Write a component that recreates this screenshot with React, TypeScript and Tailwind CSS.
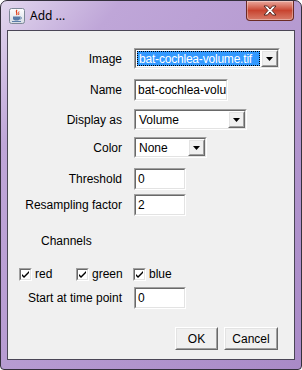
import type { ReactNode } from 'react';

function Sunken({ className = '', children }: { className?: string; children?: ReactNode }) {
  return (
    <div className={`border border-t-[#a0a0a0] border-l-[#a0a0a0] border-b-white border-r-white ${className}`}>
      <div className="h-full w-full border border-t-[#696969] border-l-[#696969] border-b-[#e3e3e3] border-r-[#e3e3e3] bg-white flex items-center overflow-hidden">
        {children}
      </div>
    </div>
  );
}

function Raised({ className = '', children }: { className?: string; children?: ReactNode }) {
  return (
    <div className={`border border-t-white border-l-white border-b-[#696969] border-r-[#696969] bg-[#f0f0f0] ${className}`}>
      <div className="h-full w-full border border-t-[#e3e3e3] border-l-[#e3e3e3] border-b-[#a0a0a0] border-r-[#a0a0a0] flex items-center justify-center">
        {children}
      </div>
    </div>
  );
}

function Arrow() {
  return (
    <svg width="7" height="4" viewBox="0 0 7 4">
      <polygon points="0,0 7,0 3.5,4" fill="#000" />
    </svg>
  );
}

function Combo({ width, value, selected }: { width: string; value: string; selected?: boolean }) {
  return (
    <Sunken className={`${width} h-[21px]`}>
      <div className="flex-1 h-full p-[1px] flex">
        {selected ? (
          <div className="flex-1 bg-[#3399ff] text-white pl-[2px] tracking-[-0.2px] flex items-center outline-1 outline-dotted outline-[#000] -outline-offset-1 whitespace-nowrap overflow-hidden">
            {value}
          </div>
        ) : (
          <div className="flex-1 pl-[2px] flex items-center whitespace-nowrap">{value}</div>
        )}
      </div>
      <Raised className="w-[17px] h-full">
        <Arrow />
      </Raised>
    </Sunken>
  );
}

function Field({ width, value }: { width: string; value: string }) {
  return (
    <Sunken className={`${width} h-[22px]`}>
      <span className="pl-[2px] whitespace-nowrap">{value}</span>
    </Sunken>
  );
}

function Row({ label, children, className = '' }: { label: string; children: ReactNode; className?: string }) {
  return (
    <div className={`flex items-center ${className}`}>
      <div className="w-[114px] text-right whitespace-nowrap">{label}</div>
      <div className="ml-[12px] flex">{children}</div>
    </div>
  );
}

function Check({ label }: { label: string }) {
  return (
    <div className="w-[57px] flex items-center">
      <div className="w-[13px] h-[13px] border border-t-[#a0a0a0] border-l-[#a0a0a0] border-b-white border-r-white">
        <div className="w-full h-full border border-t-[#696969] border-l-[#696969] border-b-[#e3e3e3] border-r-[#e3e3e3] bg-white flex items-center justify-center">
          <svg width="7" height="7" viewBox="0 0 7 7">
            <path d="M0 3 L2 5 L7 0 L7 2 L2 7 L0 5 Z" fill="#000" />
          </svg>
        </div>
      </div>
      <span className="ml-[3px]">{label}</span>
    </div>
  );
}

function JavaIcon() {
  return (
    <svg width="16" height="16" viewBox="0 0 16 16">
      <defs>
        <linearGradient id="jbg" x1="0" y1="0" x2="0" y2="1">
          <stop offset="0" stopColor="#ffffff" />
          <stop offset="1" stopColor="#d6dce4" />
        </linearGradient>
      </defs>
      <rect x="0.5" y="0.5" width="15" height="15" rx="2" fill="url(#jbg)" stroke="#7d8796" />
      <path d="M8 2 C6 4 9 5 7.5 7" stroke="#e0401c" strokeWidth="1.3" fill="none" />
      <path d="M10 3.5 C9 5 10.5 5.5 9.5 7" stroke="#e0401c" strokeWidth="1" fill="none" />
      <path d="M4 8.5 H11 V10.5 C11 12 9.5 12.5 7.5 12.5 C5.5 12.5 4 12 4 10.5 Z" fill="#5a7ca8" />
      <path d="M11 9 C13 9 13 11 11 11" stroke="#5a7ca8" strokeWidth="1" fill="none" />
      <path d="M3 13.5 H12" stroke="#5a7ca8" strokeWidth="1" />
    </svg>
  );
}

function CloseButton() {
  return (
    <div className="w-[48px] h-[20px] rounded-b-[4px] border border-t-0 border-[#6b2a24] bg-gradient-to-b from-[#e9a89e] via-[#c8432f] to-[#d77b69] flex items-center justify-center shadow-[inset_0_0_0_1px_rgba(255,255,255,0.35)]">
      <svg width="14" height="11" viewBox="0 0 14 11">
        <path
          d="M1 1 L4.5 1 L7 4 L9.5 1 L13 1 L9 5.5 L13 10 L9.5 10 L7 7 L4.5 10 L1 10 L5 5.5 Z"
          fill="#ffffff"
          stroke="#4a1f1a"
          strokeWidth="0.9"
          strokeLinejoin="round"
        />
      </svg>
    </div>
  );
}

export default function App() {
  return (
    <div className="w-[302px] h-[370px] bg-white">
      <div className="w-[302px] h-[370px] rounded-t-[7px] rounded-b-[4px] border border-[#34303c] bg-gradient-to-br from-[#e2d7ee] via-[#bfa6d8] via-20% to-[#a98ac7] flex flex-col">
        {/* Title bar */}
        <div className="h-[29px] flex items-start">
          <div className="flex items-center h-[29px] ml-[8px]">
            <JavaIcon />
            <span className="ml-[5px] font-['Noto_Sans',sans-serif] text-[12px] text-black mt-[1px]">Add ...</span>
          </div>
          <div className="ml-auto mr-[7px]">
            <CloseButton />
          </div>
        </div>

        {/* Client area */}
        <div className="mx-[6px] h-[330px] border border-[#4a4656] bg-[#f0f0f0] font-['Liberation_Sans',Arial,sans-serif] text-[12px] text-black flex flex-col">
          <Row label="Image" className="mt-[17px]">
            <Combo width="w-[146px]" value="bat-cochlea-volume.tif" selected />
          </Row>
          <Row label="Name" className="mt-[10px]">
            <Field width="w-[94px]" value="bat-cochlea-volu" />
          </Row>
          <Row label="Display as" className="mt-[8px]">
            <Combo width="w-[113px]" value="Volume" />
          </Row>
          <Row label="Color" className="mt-[7px]">
            <Combo width="w-[73px]" value="None" />
          </Row>
          <Row label="Threshold" className="mt-[10px]">
            <Field width="w-[52px]" value="0" />
          </Row>
          <Row label="Resampling factor" className="mt-[4px]">
            <Field width="w-[52px]" value="2" />
          </Row>
          <div className="mt-[18px] pl-[33px] h-[14px] leading-[14px]">Channels</div>
          <div className="mt-[19px] pl-[11px] h-[14px] flex items-center">
            <Check label="red" />
            <Check label="green" />
            <Check label="blue" />
          </div>
          <Row label="Start at time point" className="mt-[6px]">
            <Field width="w-[52px]" value="0" />
          </Row>
          <div className="mt-[18px] flex justify-end pr-[16px] gap-[6px]">
            <Raised className="w-[43px] h-[23px]">OK</Raised>
            <Raised className="w-[54px] h-[23px]">Cancel</Raised>
          </div>
        </div>
      </div>
    </div>
  );
}
